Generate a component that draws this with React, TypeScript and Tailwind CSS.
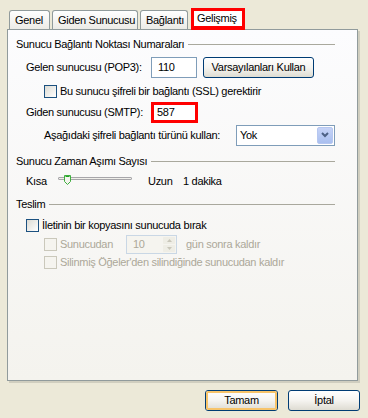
const font = "font-['Liberation_Sans',Arial,sans-serif]";

const Check = ({ disabled }: { disabled?: boolean }) => (
	<span
		className={
			disabled
				? "block w-[13px] h-[13px] shrink-0 border border-[#CAC8BB] bg-[#F5F4EF]"
				: "block w-[13px] h-[13px] shrink-0 border border-[#1C5180] bg-gradient-to-br from-[#DCDBD4] to-white"
		}
	/>
);

const Section = ({ title, className }: { title: string; className?: string }) => (
	<div className={"flex items-center h-[14px] " + (className ?? "")}>
		<span className="whitespace-nowrap">{title}</span>
		<div className="flex-1 ml-[4px] h-px bg-[#A9A89D]" />
	</div>
);

const Tab = ({ label, w }: { label: string; w: string }) => (
	<div
		className={
			"h-[19px] mr-[2px] border border-b-0 border-[#919B9C] rounded-t-[3px] bg-gradient-to-b from-white to-[#ECEBE6] pl-[5px] flex items-center whitespace-nowrap " +
			w
		}
	>
		{label}
	</div>
);

const XpButton = ({ label, w, primary }: { label: string; w: string; primary?: boolean }) => (
	<div
		className={
			"h-[21px] rounded-[3px] border border-[#003C74] bg-gradient-to-b from-white via-[#F5F4F0] to-[#DEDCD2] flex items-center justify-center whitespace-nowrap " +
			w
		}
	>
		<div
			className={
				"w-full h-full rounded-[2px] flex items-center justify-center " +
				(primary ? "border-2 border-[#F7C46A]" : "border border-transparent")
			}
		>
			{label}
		</div>
	</div>
);

export default function App() {
	return (
		<div className={"w-[368px] h-[418px] bg-[#ECE9D8] text-[11px] tracking-[-0.3px] text-black overflow-hidden " + font}>
			{/* tabs */}
			<div className="h-[29px] pl-[9px] flex items-end">
				<Tab label="Genel" w="w-[41px]" />
				<Tab label="Giden Sunucusu" w="w-[86px]" />
				<Tab label="Bağlantı" w="w-[48px]" />
				<div className="relative z-10 -mb-px h-[22px] w-[54px] ml-[1px] bg-white border-[3px] border-b-[4px] border-[#FF0000] flex items-center pl-[3px] whitespace-nowrap">
					Gelişmiş
				</div>
			</div>

			{/* panel */}
			<div className="ml-[7px] w-[351px] h-[352px] border border-[#919B9C] bg-gradient-to-b from-[#FCFCFE] to-[#F4F3EE] shadow-[2px_2px_0_#D0CEBF] pl-[8px] pr-[22px] whitespace-nowrap">
				<Section title="Sunucu Bağlantı Noktası Numaraları" className="mt-[7px]" />

				<div className="mt-[5px] h-[22px] flex items-center pl-[10px]">
					<span className="w-[125px]">Gelen sunucusu (POP3):</span>
					<div className="w-[46px] h-[21px] border border-[#7F9DB9] bg-white flex items-center pl-[6px]">110</div>
					<div className="ml-[6px]">
						<XpButton label="Varsayılanları Kullan" w="w-[111px]" />
					</div>
				</div>

				<div className="mt-[7px] h-[13px] flex items-center pl-[28px] gap-[3px]">
					<Check />
					<span>Bu sunucu şifreli bir bağlantı (SSL) gerektirir</span>
				</div>

				<div className="mt-[3px] h-[22px] flex items-center pl-[10px]">
					<span className="w-[125px]">Giden sunucusu (SMTP):</span>
					<div className="w-[47px] h-[21px] border-[3px] border-[#FF0000] bg-white flex items-center pl-[3px]">587</div>
				</div>

				<div className="mt-px h-[22px] flex items-center pl-[28px]">
					<span className="w-[192px]">Aşağıdaki şifreli bağlantı türünü kullan:</span>
					<div className="w-[99px] h-[21px] border border-[#7F9DB9] bg-white flex items-center pl-[3px] pr-px">
						<span className="flex-1">Yok</span>
						<div className="w-[16px] h-[17px] rounded-[2px] bg-gradient-to-b from-[#C6D3F7] to-[#A9BFEF] border border-[#B6C7F0] flex items-center justify-center">
							<svg width="8" height="6" viewBox="0 0 8 6">
								<path d="M1 1 L4 4 L7 1" stroke="#4D6185" strokeWidth="2" fill="none" />
							</svg>
						</div>
					</div>
				</div>

				<Section title="Sunucu Zaman Aşımı Sayısı" className="mt-[8px]" />

				<div className="mt-[6px] h-[14px] flex items-center pl-[10px]">
					<span className="w-[32px]">Kısa</span>
					<div className="relative w-[74px] h-[14px]">
						<div className="absolute left-0 right-0 top-[3px] h-[3px] border border-[#A7A6AA] bg-[#F0EFEA] rounded-[1px]" />
						<svg className="absolute left-[6px] top-[1px]" width="7" height="10" viewBox="0 0 7 10">
							<path d="M0.5 0.5 H6.5 V6.5 L3.5 9.5 L0.5 6.5 Z" fill="#F4F4EE" stroke="#3EAE3E" />
							<path d="M1.5 1.5 H5.5" stroke="#21A121" />
						</svg>
					</div>
					<span className="ml-[16px] w-[35px]">Uzun</span>
					<span>1 dakika</span>
				</div>

				<Section title="Teslim" className="mt-[9px]" />

				<div className="mt-[8px] h-[13px] flex items-center pl-[10px] gap-[3px]">
					<Check />
					<span>İletinin bir kopyasını sunucuda bırak</span>
				</div>

				<div className="mt-[2px] h-[20px] flex items-center pl-[28px] text-[#ACA899]">
					<Check disabled />
					<span className="ml-[3px] w-[66px]">Sunucudan</span>
					<div className="w-[51px] h-[19px] border border-[#C9D7E5] bg-[#F5F4EF] flex items-center pl-[6px] pr-px">
						<span className="flex-1">10</span>
						<div className="w-[12px] h-[15px] flex flex-col gap-px">
							<div className="flex-1 bg-[#EEEDE5] rounded-[1px] flex items-center justify-center">
								<svg width="5" height="3" viewBox="0 0 5 3"><path d="M0 3 L2.5 0 L5 3 Z" fill="#C9C7BA" /></svg>
							</div>
							<div className="flex-1 bg-[#EEEDE5] rounded-[1px] flex items-center justify-center">
								<svg width="5" height="3" viewBox="0 0 5 3"><path d="M0 0 L2.5 3 L5 0 Z" fill="#C9C7BA" /></svg>
							</div>
						</div>
					</div>
					<span className="ml-[9px]">gün sonra kaldır</span>
				</div>

				<div className="mt-[2px] h-[13px] flex items-center pl-[28px] gap-[3px] text-[#ACA899]">
					<Check disabled />
					<span>Silinmiş Öğeler'den silindiğinde sunucudan kaldır</span>
				</div>
			</div>

			{/* dialog buttons */}
			<div className="mt-[9px] flex pl-[205px] gap-[10px]">
				<XpButton label="Tamam" w="w-[73px]" primary />
				<XpButton label="İptal" w="w-[72px]" />
			</div>
		</div>
	);
}
